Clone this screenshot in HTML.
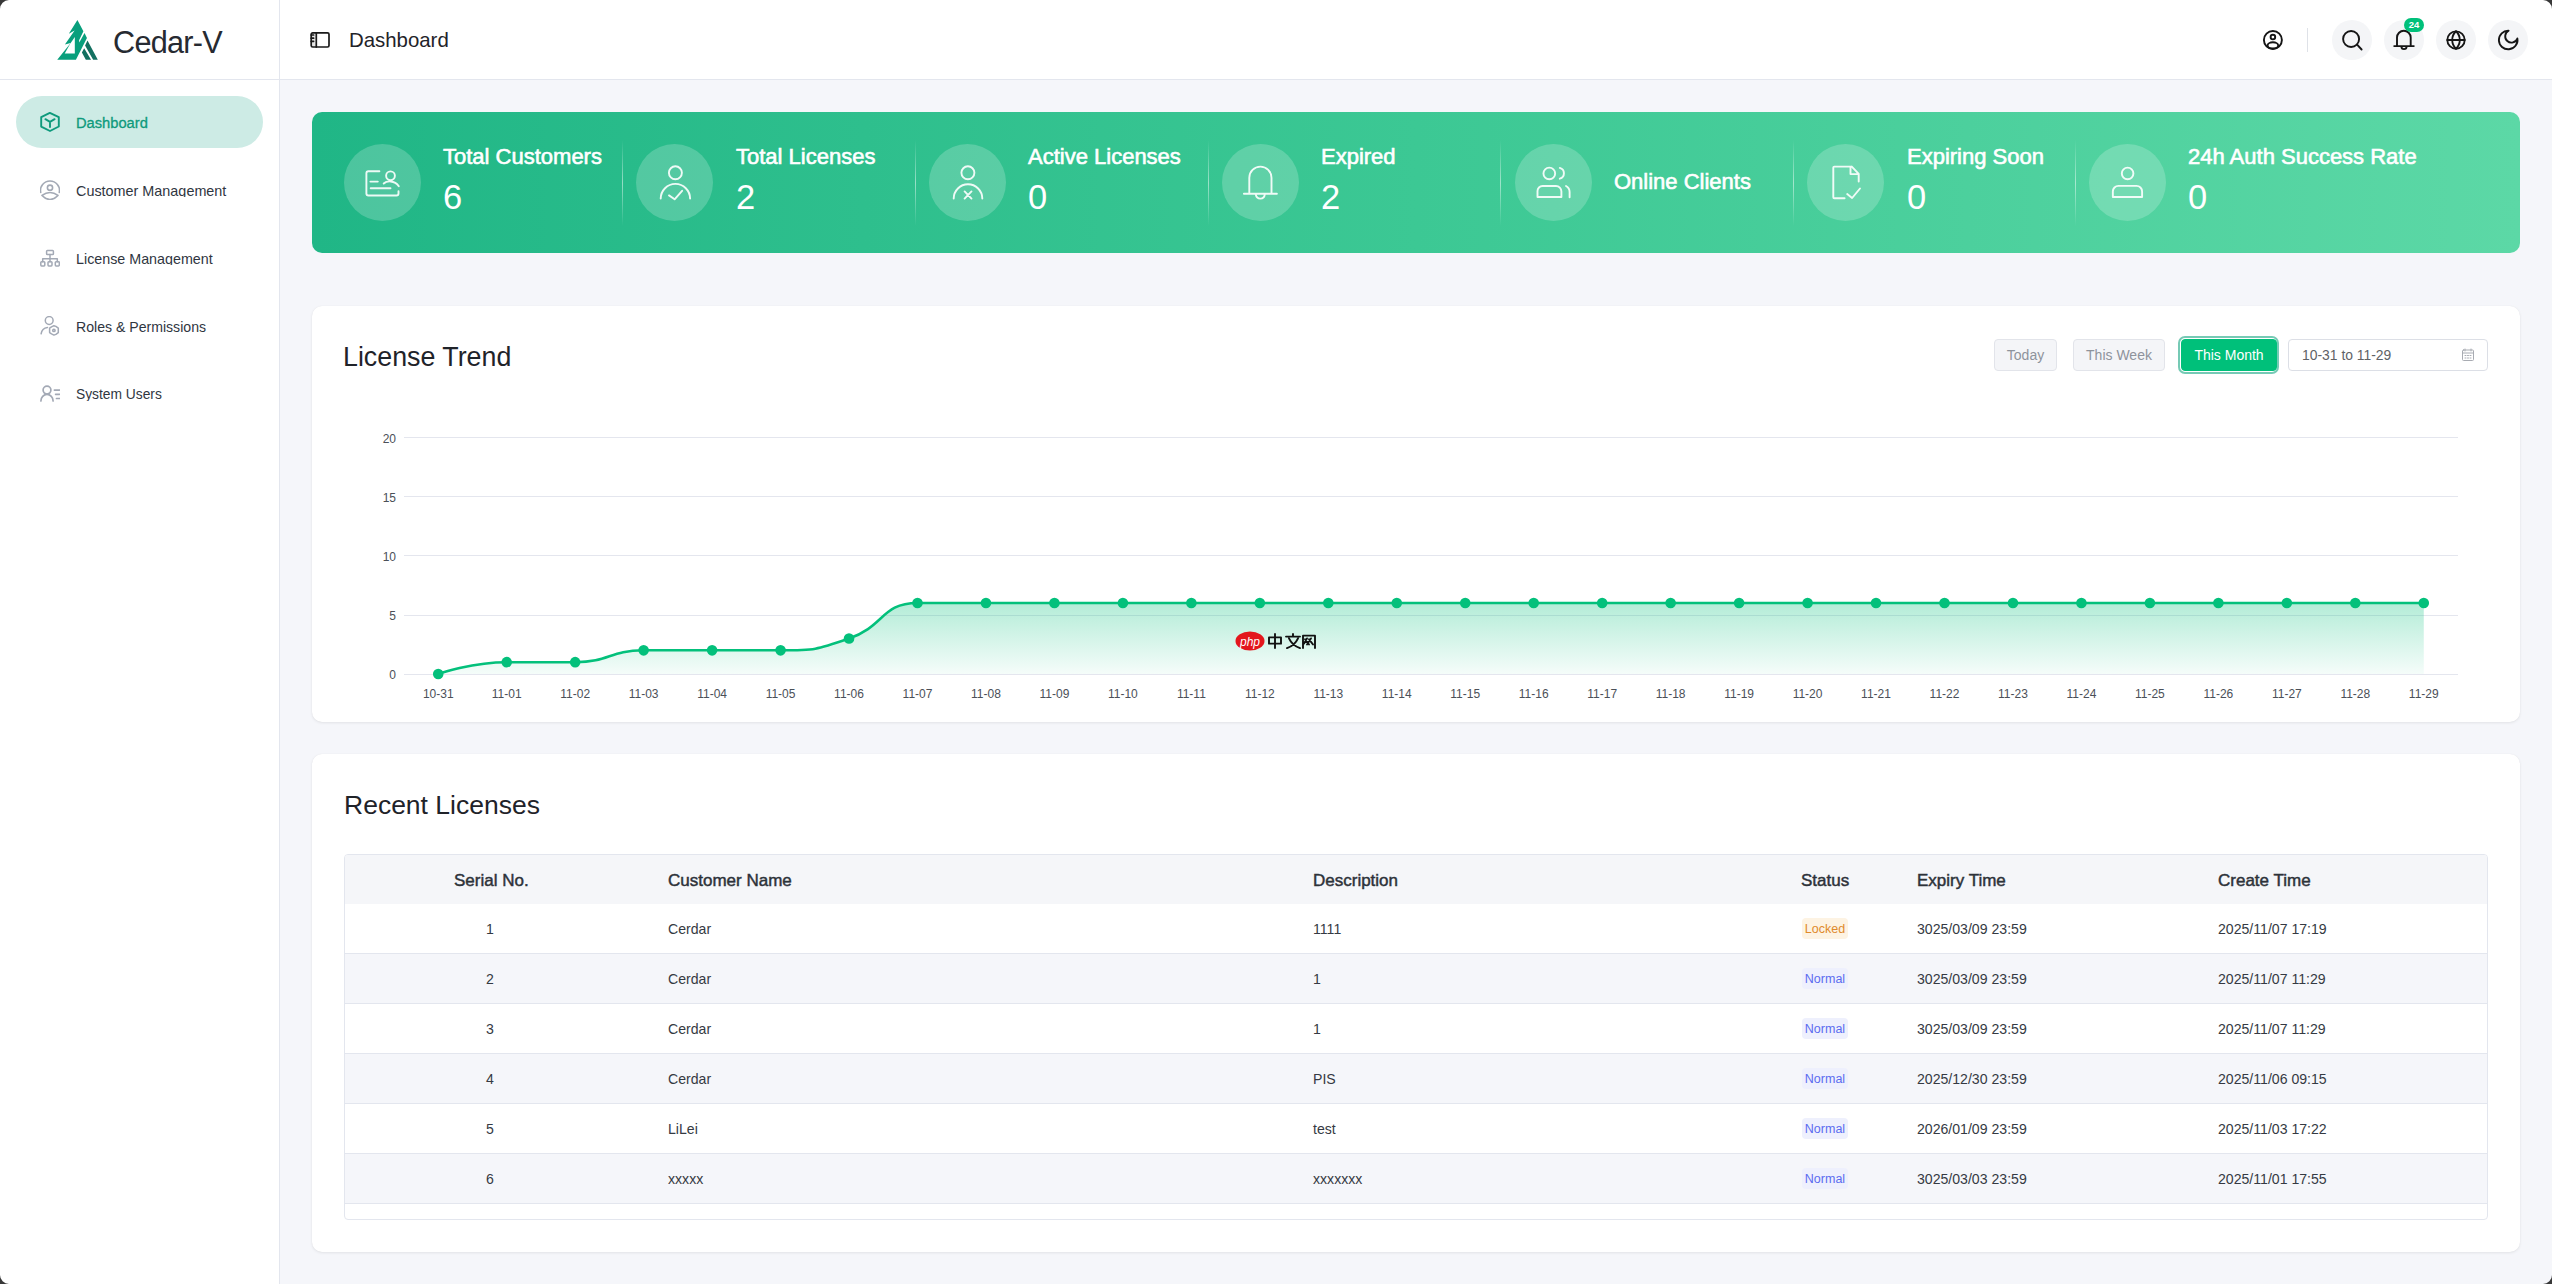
<!DOCTYPE html>
<html><head><meta charset="utf-8">
<style>
*{box-sizing:border-box;margin:0;padding:0}
html,body{width:2552px;height:1284px;overflow:hidden}
body{background:#f5f6fa;font-family:"Liberation Sans",sans-serif;color:#1f2329;position:relative}
.abs{position:absolute}
.side{left:0;top:0;width:280px;height:1284px;background:#fff;border-right:1px solid #e3e6ee}
.logo-bar{left:0;top:0;width:280px;height:80px;border-bottom:1px solid #e3e6ee}
.hdr{left:280px;top:0;width:2272px;height:80px;background:#fff;border-bottom:1px solid #e3e6ee}
.t{position:absolute;white-space:nowrap;line-height:1}
.menu-act{left:16px;top:96px;width:247px;height:52px;border-radius:26px;background:#cdebe5}
.mc{position:absolute;left:70px;width:200px;overflow:hidden}
.mi{position:absolute;left:6px;font-size:14.5px;color:#30363f;white-space:nowrap;line-height:1}
.ico{position:absolute;fill:none;stroke-linecap:round;stroke-linejoin:round}
.banner{left:312px;top:112px;width:2208px;height:141px;border-radius:10px;background:linear-gradient(90deg,#20b686 0%,#3cc894 50%,#5cd8a6 100%)}
.circ{position:absolute;width:77px;height:77px;border-radius:50%;background:rgba(255,255,255,.2)}
.blab{position:absolute;font-weight:normal;-webkit-text-stroke:0.6px #fff;font-size:22px;color:#fff;white-space:nowrap;line-height:1}
.bval{position:absolute;font-size:34.5px;color:#fff;white-space:nowrap;line-height:1}
.bdiv{position:absolute;top:140px;width:1px;height:86px;background:linear-gradient(180deg,rgba(255,255,255,0),rgba(255,255,255,.5) 50%,rgba(255,255,255,0))}
.card{position:absolute;background:#fff;border-radius:10px;box-shadow:0 1px 3px rgba(0,0,0,.08),0 0 1px rgba(0,0,0,.07)}
.btn{position:absolute;top:339px;height:32px;border:1px solid #e2e4ea;background:#f4f5f8;border-radius:4px;font-size:14px;color:#8e939c;line-height:30px;text-align:center}
.hcirc{position:absolute;top:20px;width:40px;height:40px;border-radius:50%;background:#f4f5f7}
table{position:absolute;border-collapse:collapse}
.tbl{position:absolute;left:344px;top:854px;width:2144px;height:366px;border:1px solid #e3e6ee;border-radius:4px;overflow:hidden}
.row{position:absolute;left:0;width:2142px;height:50px;border-bottom:1px solid #e3e6ee}
.th{position:absolute;font-weight:normal;-webkit-text-stroke:0.45px #2d3239;font-size:17px;color:#2d3239;white-space:nowrap;line-height:1;top:17px}
.td{position:absolute;font-size:14.1px;color:#353a43;white-space:nowrap;line-height:1;top:18px}
.tag{position:absolute;top:14px;height:21px;width:46px;border-radius:4px;font-size:12.5px;line-height:23px;text-align:center}
.corner{position:absolute;width:10px;height:10px}
</style></head><body>

<!-- sidebar -->
<div class="abs side"></div>
<div class="abs logo-bar"></div>
<svg class="abs" style="left:52px;top:16px" width="52" height="48" viewBox="0 0 1391 1284">
<path fill="#089f7c" d="M680 105L840 410L725 650L730 710L870 455L935 590L640 1170L140 1170L500 725L345 765L605 385L450 475Z"/>
<path fill="#fff" d="M610 560L610 1000L340 1000L490 735Z"/>
<path fill="#137060" d="M950 655L1225 1170L1100 1170L885 790Z M860 860L1045 1170L905 1170L800 975Z"/>
</svg>
<div class="t" style="left:113px;top:27px;font-size:30.6px;color:#262a31;letter-spacing:-0.7px">Cedar-V</div>

<div class="abs menu-act"></div>
<svg class="ico" style="left:40px;top:112px" width="20" height="20" viewBox="0 0 20 20" stroke="#0e9a7c" stroke-width="1.9">
<path d="M9.85 0.9L18.8 5.2V14.5L10 19L1.2 14.6V5.2Z"/><path d="M5.4 7.2L10 9.8L14.6 7.2M10 9.8V15.1"/></svg>
<div class="mc" style="top:110px;height:19px"><div class="mi" style="top:6px;color:#0e9a7c;font-size:14.7px;-webkit-text-stroke:0.3px #0e9a7c">Dashboard</div></div>

<svg class="ico" style="left:40px;top:180px" width="20" height="20" viewBox="0 0 20 20" stroke="#a3a9b5" stroke-width="1.6">
<path d="M0.7 12.4A9.5 9.5 0 1 1 19.3 12.4"/><circle cx="10" cy="7.7" r="2.6"/><path d="M2 15.4Q10 9.6 18 15.4Q10 23.6 2 15.4Z"/></svg>
<div class="mc" style="top:178px;height:19px"><div class="mi" style="top:6px;font-size:14.4px">Customer Management</div></div>

<svg class="ico" style="left:40px;top:248px" width="20" height="20" viewBox="0 0 20 20" stroke="#a3a9b5" stroke-width="1.5">
<rect x="6.6" y="2.4" width="6.8" height="4.1" rx="0.8"/><path d="M10 6.5V10.8M2.7 13.8V10.8H17.3V13.8M10 10.8V13.8"/><rect x="0.8" y="13.8" width="4" height="4.1" rx="0.8"/><rect x="8" y="13.8" width="4" height="4.1" rx="0.8"/><rect x="15.3" y="13.8" width="4" height="4.1" rx="0.8"/></svg>
<div class="mc" style="top:246px;height:19px"><div class="mi" style="top:6px;font-size:14.3px">License Management</div></div>

<svg class="ico" style="left:40px;top:316px" width="20" height="20" viewBox="0 0 20 20" stroke="#a3a9b5" stroke-width="1.5">
<circle cx="9.2" cy="4.5" r="3.9"/><path d="M1.1 17.8A7.5 7.5 0 0 1 7.5 11.4"/><path d="M13.9 9.7L15.9 10.4L18.3 12.1L18.3 16.7L15.9 18.4L13.9 19.1L11.5 17.9L9.6 16.6V12.2L11.5 10.9Z"/><circle cx="13.9" cy="14.4" r="1.2"/></svg>
<div class="mc" style="top:314px;height:19px"><div class="mi" style="top:6px;font-size:14.1px">Roles &amp; Permissions</div></div>

<svg class="ico" style="left:40px;top:384px" width="20" height="20" viewBox="0 0 20 20" stroke="#a3a9b5" stroke-width="1.7">
<circle cx="7" cy="6.1" r="3.9"/><path d="M0.9 17A6.1 6.6 0 0 1 13.1 17"/><path d="M14.4 6.1H19.5M15.6 10.3H19.5M16.5 14.5H19.5"/></svg>
<div class="mc" style="top:382px;height:19px"><div class="mi" style="top:6px;font-size:13.8px">System Users</div></div>

<!-- header -->
<div class="abs hdr"></div>
<svg class="ico" style="left:309px;top:30px" width="22" height="20" viewBox="0 0 22 20" stroke="#1a1a1a" stroke-width="1.7">
<rect x="2.2" y="2.8" width="5.1" height="14.2" fill="#e6e6e6" stroke="none"/><rect x="2.2" y="2.8" width="17.8" height="14.2" rx="1.5"/><path d="M7.3 2.8V17M2.2 5H4.6M2.2 8.2H4.6M2.2 11.3H4.6"/></svg>
<div class="t" style="left:349px;top:30px;font-size:20.4px;color:#1f2329">Dashboard</div>

<svg class="ico" style="left:2260px;top:27px" width="26" height="26" viewBox="0 0 26 26" stroke="#151515" stroke-width="1.9">
<circle cx="12.9" cy="13" r="9"/><circle cx="12.9" cy="10.04" r="2.3"/><ellipse cx="12.9" cy="18.4" rx="5.3" ry="3.1"/></svg>
<div class="abs" style="left:2307px;top:28px;width:1px;height:24px;background:#dfe2e8"></div>
<div class="hcirc" style="left:2332px"></div>
<div class="hcirc" style="left:2384px"></div>
<div class="hcirc" style="left:2436px"></div>
<div class="hcirc" style="left:2488px"></div>
<svg class="ico" style="left:2338px;top:26px" width="26" height="26" viewBox="0 0 26 26" stroke="#151515" stroke-width="1.9">
<circle cx="13.1" cy="13" r="8"/><path d="M19.1 18.6L23.6 23.5"/></svg>
<svg class="ico" style="left:2390px;top:26px" width="28" height="28" viewBox="0 0 28 28" stroke="#151515" stroke-width="1.9">
<path d="M7 20.1V11.55A6.85 6.85 0 0 1 20.7 11.55V20.1M4.2 20.1H23.8M11.4 20.5A2.6 2.6 0 0 0 16.6 20.5"/></svg>
<div class="abs" style="left:2404px;top:18px;width:20px;height:14px;border-radius:7px;background:#00c07a;color:#fff;font-size:9.5px;font-weight:bold;line-height:14px;text-align:center">24</div>
<svg class="ico" style="left:2445px;top:29px" width="22" height="22" viewBox="0 0 24 24" stroke="#151515" stroke-width="2">
<circle cx="12" cy="12" r="9.5"/><path d="M12 2.5a13 13 0 0 0 0 19 13 13 0 0 0 0-19"/><path d="M2.5 12h19"/></svg>
<svg class="ico" style="left:2496px;top:28px" width="26" height="26" viewBox="0 0 26 26" stroke="#151515" stroke-width="1.9">
<path d="M12.6 2.71A9.3 9.3 0 1 0 21.38 10.55A6.3 6.3 0 1 1 12.6 2.71Z"/></svg>

<!-- banner -->
<div class="abs banner"></div>
<div class="circ" style="left:344px;top:144px"></div>
<div class="circ" style="left:636px;top:144px"></div>
<div class="circ" style="left:929px;top:144px"></div>
<div class="circ" style="left:1222px;top:144px"></div>
<div class="circ" style="left:1515px;top:144px"></div>
<div class="circ" style="left:1807px;top:144px"></div>
<div class="circ" style="left:2089px;top:144px"></div>
<div class="bdiv" style="left:622px"></div>
<div class="bdiv" style="left:915px"></div>
<div class="bdiv" style="left:1208px"></div>
<div class="bdiv" style="left:1500px"></div>
<div class="bdiv" style="left:1793px"></div>
<div class="bdiv" style="left:2075px"></div>

<!-- banner icons -->
<svg class="ico" style="left:360px;top:164px" width="46" height="42" viewBox="0 0 46 42" stroke="rgba(255,255,255,.9)" stroke-width="1.9">
<path d="M19.4 7.25H8.4a2 2 0 0 0-2 2V29.5a2 2 0 0 0 2 2H36.5a2 2 0 0 0 2-2V27.2"/><path d="M10.4 17.6H17.8M10.7 24.3H30.5"/><circle cx="30.5" cy="11.8" r="4.4"/><path d="M23.7 19.5C26.5 16.8 34.5 15.8 38.8 22.2"/></svg>
<svg class="ico" style="left:652px;top:162px" width="46" height="42" viewBox="0 0 46 42" stroke="rgba(255,255,255,.9)" stroke-width="1.9">
<circle cx="23.4" cy="10.8" r="6.5"/><path d="M8.7 36.6A14.7 14.7 0 0 1 38.1 36.6"/><path d="M17 33.4L22.6 37.3L30.1 28.8"/></svg>
<svg class="ico" style="left:945px;top:162px" width="46" height="42" viewBox="0 0 46 42" stroke="rgba(255,255,255,.9)" stroke-width="1.9">
<circle cx="22.9" cy="10.8" r="6.5"/><path d="M8.7 36.6A14.3 14.3 0 0 1 37.3 36.6"/><path d="M19.6 29.4L26.5 36.6M26.5 29.4L19.6 36.6"/></svg>
<svg class="ico" style="left:1238px;top:162px" width="46" height="42" viewBox="0 0 46 42" stroke="rgba(255,255,255,.9)" stroke-width="1.9">
<path d="M11.3 31.7V15.7A11.1 11.1 0 0 1 33.5 15.7V31.7M5.9 31.7H38.9M17.7 32.4Q18.5 36.6 22.4 36.6Q26.3 36.6 26.8 32.4"/></svg>
<svg class="ico" style="left:1531px;top:162px" width="46" height="42" viewBox="0 0 46 42" stroke="rgba(255,255,255,.9)" stroke-width="1.9">
<circle cx="18.3" cy="11.45" r="5.85"/><path d="M6.5 35V29A5 5 0 0 1 11.5 24H25A5.4 5.4 0 0 1 30.4 29.4V35Z"/><path d="M28.8 5.9A5.6 5.6 0 0 1 28.8 16.7M35 24Q38.6 26 38.6 30V35.3"/></svg>
<svg class="ico" style="left:1823px;top:162px" width="46" height="42" viewBox="0 0 46 42" stroke="rgba(255,255,255,.9)" stroke-width="1.9">
<path d="M28.8 4.6H11.3a1 1 0 0 0-1 1V35.3a1 1 0 0 0 1 1H21.6M28.8 4.6L35.7 11.8V19.6M27.5 5.2V12.1H35"/><path d="M24.2 32.1L29.1 36L37 26.5"/></svg>
<svg class="ico" style="left:2105px;top:162px" width="46" height="42" viewBox="0 0 46 42" stroke="rgba(255,255,255,.9)" stroke-width="1.9">
<circle cx="22.6" cy="11.45" r="5.8"/><path d="M7.85 35V29.5A5.6 5.6 0 0 1 13.45 23.9H31.5A5.6 5.6 0 0 1 37.1 29.5V35Z"/></svg>

<div class="blab" style="left:443px;top:146px">Total Customers</div>
<div class="bval" style="left:443px;top:180px">6</div>
<div class="blab" style="left:736px;top:146px">Total Licenses</div>
<div class="bval" style="left:736px;top:180px">2</div>
<div class="blab" style="left:1028px;top:146px">Active Licenses</div>
<div class="bval" style="left:1028px;top:180px">0</div>
<div class="blab" style="left:1321px;top:146px">Expired</div>
<div class="bval" style="left:1321px;top:180px">2</div>
<div class="blab" style="left:1614px;top:171px">Online Clients</div>
<div class="blab" style="left:1907px;top:146px">Expiring Soon</div>
<div class="bval" style="left:1907px;top:180px">0</div>
<div class="blab" style="left:2188px;top:146px">24h Auth Success Rate</div>
<div class="bval" style="left:2188px;top:180px">0</div>

<!-- chart card -->
<div class="card" style="left:312px;top:306px;width:2208px;height:416px"></div>
<div class="t" style="left:343px;top:344px;font-size:26.8px;color:#1f2329">License Trend</div>
<div class="btn" style="left:1994px;width:63px">Today</div>
<div class="btn" style="left:2073px;width:92px">This Week</div>
<div class="abs" style="left:2178px;top:336px;width:101px;height:38px;border:2px solid #76cab5;border-radius:7px"></div>
<div class="btn" style="left:2181px;width:96px;background:#00c07a;border-color:#00c07a;color:#fff">This Month</div>
<div class="abs" style="left:2288px;top:339px;width:200px;height:32px;border:1px solid #dcdfe6;border-radius:4px;background:#fff"></div>
<div class="t" style="left:2302px;top:349px;font-size:13.9px;color:#606266">10-31 to 11-29</div>
<svg class="ico" style="left:2461px;top:348px" width="14" height="14" viewBox="0 0 14 14" stroke="#a8abb2" stroke-width="1">
<rect x="1.5" y="2" width="11" height="10.5" rx="1"/><path d="M1.5 5h11M4 1v2M10 1v2"/><path d="M4 7.5h1M6.5 7.5h1M9 7.5h1M4 10h1M6.5 10h1M9 10h1"/></svg>

<svg class="abs" style="left:0;top:0" width="2552" height="1284">
<defs><linearGradient id="ag" x1="0" y1="0" x2="0" y2="1"><stop offset="0" stop-color="#03c07b" stop-opacity=".3"/><stop offset="1" stop-color="#03c07b" stop-opacity=".04"/></linearGradient></defs>
<g stroke="#e4e6ee" stroke-width="1">
<path d="M404 437.5H2458M404 496.5H2458M404 555.5H2458M404 615.5H2458M404 674.5H2458"/>
</g>
<g font-family="Liberation Sans" font-size="12" fill="#4b5058" text-anchor="end">
<text x="396" y="442.5">20</text><text x="396" y="501.5">15</text><text x="396" y="560.5">10</text><text x="396" y="619.5">5</text><text x="396" y="679">0</text>
</g>
<path d="M438.23 674.00C438.23 674.00 472.22 662.17 506.70 662.17C540.68 662.17 541.18 662.17 575.17 662.17C609.65 662.17 609.15 650.35 643.63 650.35C677.62 650.35 677.87 650.35 712.10 650.35C746.33 650.35 746.58 650.35 780.57 650.35C815.05 650.35 816.58 649.73 849.03 638.52C885.05 626.08 881.23 603.05 917.50 603.05C949.70 603.05 951.73 603.05 985.97 603.05C1020.20 603.05 1020.20 603.05 1054.43 603.05C1088.67 603.05 1088.67 603.05 1122.90 603.05C1157.13 603.05 1157.13 603.05 1191.37 603.05C1225.60 603.05 1225.60 603.05 1259.83 603.05C1294.07 603.05 1294.07 603.05 1328.30 603.05C1362.53 603.05 1362.53 603.05 1396.77 603.05C1431.00 603.05 1431.00 603.05 1465.23 603.05C1499.47 603.05 1499.47 603.05 1533.70 603.05C1567.93 603.05 1567.93 603.05 1602.17 603.05C1636.40 603.05 1636.40 603.05 1670.63 603.05C1704.87 603.05 1704.87 603.05 1739.10 603.05C1773.33 603.05 1773.33 603.05 1807.57 603.05C1841.80 603.05 1841.80 603.05 1876.03 603.05C1910.27 603.05 1910.27 603.05 1944.50 603.05C1978.73 603.05 1978.73 603.05 2012.97 603.05C2047.20 603.05 2047.20 603.05 2081.43 603.05C2115.67 603.05 2115.67 603.05 2149.90 603.05C2184.13 603.05 2184.13 603.05 2218.37 603.05C2252.60 603.05 2252.60 603.05 2286.83 603.05C2321.07 603.05 2321.07 603.05 2355.30 603.05C2389.53 603.05 2423.77 603.05 2423.77 603.05L2423.77 674.00 L438.23 674.00 Z" fill="url(#ag)"/>
<path d="M438.23 674.00C438.23 674.00 472.22 662.17 506.70 662.17C540.68 662.17 541.18 662.17 575.17 662.17C609.65 662.17 609.15 650.35 643.63 650.35C677.62 650.35 677.87 650.35 712.10 650.35C746.33 650.35 746.58 650.35 780.57 650.35C815.05 650.35 816.58 649.73 849.03 638.52C885.05 626.08 881.23 603.05 917.50 603.05C949.70 603.05 951.73 603.05 985.97 603.05C1020.20 603.05 1020.20 603.05 1054.43 603.05C1088.67 603.05 1088.67 603.05 1122.90 603.05C1157.13 603.05 1157.13 603.05 1191.37 603.05C1225.60 603.05 1225.60 603.05 1259.83 603.05C1294.07 603.05 1294.07 603.05 1328.30 603.05C1362.53 603.05 1362.53 603.05 1396.77 603.05C1431.00 603.05 1431.00 603.05 1465.23 603.05C1499.47 603.05 1499.47 603.05 1533.70 603.05C1567.93 603.05 1567.93 603.05 1602.17 603.05C1636.40 603.05 1636.40 603.05 1670.63 603.05C1704.87 603.05 1704.87 603.05 1739.10 603.05C1773.33 603.05 1773.33 603.05 1807.57 603.05C1841.80 603.05 1841.80 603.05 1876.03 603.05C1910.27 603.05 1910.27 603.05 1944.50 603.05C1978.73 603.05 1978.73 603.05 2012.97 603.05C2047.20 603.05 2047.20 603.05 2081.43 603.05C2115.67 603.05 2115.67 603.05 2149.90 603.05C2184.13 603.05 2184.13 603.05 2218.37 603.05C2252.60 603.05 2252.60 603.05 2286.83 603.05C2321.07 603.05 2321.07 603.05 2355.30 603.05C2389.53 603.05 2423.77 603.05 2423.77 603.05" fill="none" stroke="#03c07b" stroke-width="2.5"/>
<g fill="#03c07b"><circle cx="438.23" cy="674.00" r="5.3"/><circle cx="506.70" cy="662.17" r="5.3"/><circle cx="575.17" cy="662.17" r="5.3"/><circle cx="643.63" cy="650.35" r="5.3"/><circle cx="712.10" cy="650.35" r="5.3"/><circle cx="780.57" cy="650.35" r="5.3"/><circle cx="849.03" cy="638.52" r="5.3"/><circle cx="917.50" cy="603.05" r="5.3"/><circle cx="985.97" cy="603.05" r="5.3"/><circle cx="1054.43" cy="603.05" r="5.3"/><circle cx="1122.90" cy="603.05" r="5.3"/><circle cx="1191.37" cy="603.05" r="5.3"/><circle cx="1259.83" cy="603.05" r="5.3"/><circle cx="1328.30" cy="603.05" r="5.3"/><circle cx="1396.77" cy="603.05" r="5.3"/><circle cx="1465.23" cy="603.05" r="5.3"/><circle cx="1533.70" cy="603.05" r="5.3"/><circle cx="1602.17" cy="603.05" r="5.3"/><circle cx="1670.63" cy="603.05" r="5.3"/><circle cx="1739.10" cy="603.05" r="5.3"/><circle cx="1807.57" cy="603.05" r="5.3"/><circle cx="1876.03" cy="603.05" r="5.3"/><circle cx="1944.50" cy="603.05" r="5.3"/><circle cx="2012.97" cy="603.05" r="5.3"/><circle cx="2081.43" cy="603.05" r="5.3"/><circle cx="2149.90" cy="603.05" r="5.3"/><circle cx="2218.37" cy="603.05" r="5.3"/><circle cx="2286.83" cy="603.05" r="5.3"/><circle cx="2355.30" cy="603.05" r="5.3"/><circle cx="2423.77" cy="603.05" r="5.3"/></g>
<g font-family="Liberation Sans" font-size="12" fill="#4b5058" text-anchor="middle"><text x="438.23" y="697.5">10-31</text><text x="506.70" y="697.5">11-01</text><text x="575.17" y="697.5">11-02</text><text x="643.63" y="697.5">11-03</text><text x="712.10" y="697.5">11-04</text><text x="780.57" y="697.5">11-05</text><text x="849.03" y="697.5">11-06</text><text x="917.50" y="697.5">11-07</text><text x="985.97" y="697.5">11-08</text><text x="1054.43" y="697.5">11-09</text><text x="1122.90" y="697.5">11-10</text><text x="1191.37" y="697.5">11-11</text><text x="1259.83" y="697.5">11-12</text><text x="1328.30" y="697.5">11-13</text><text x="1396.77" y="697.5">11-14</text><text x="1465.23" y="697.5">11-15</text><text x="1533.70" y="697.5">11-16</text><text x="1602.17" y="697.5">11-17</text><text x="1670.63" y="697.5">11-18</text><text x="1739.10" y="697.5">11-19</text><text x="1807.57" y="697.5">11-20</text><text x="1876.03" y="697.5">11-21</text><text x="1944.50" y="697.5">11-22</text><text x="2012.97" y="697.5">11-23</text><text x="2081.43" y="697.5">11-24</text><text x="2149.90" y="697.5">11-25</text><text x="2218.37" y="697.5">11-26</text><text x="2286.83" y="697.5">11-27</text><text x="2355.30" y="697.5">11-28</text><text x="2423.77" y="697.5">11-29</text></g>
<!-- watermark -->
<ellipse cx="1250" cy="641" rx="14.5" ry="9.5" fill="#e3161c"/>
<text x="1250" y="645.5" font-family="Liberation Sans" font-style="italic" font-size="12" fill="#fff" text-anchor="middle">php</text>
</svg>
<svg class="ico" style="left:1267px;top:633px" width="50" height="16" viewBox="0 0 50 18" preserveAspectRatio="none" stroke="#111" stroke-width="1.9">
<path d="M2 5h12v7H2z M8 1v16"/><path d="M19 4h14M22 6c2 5 6 9 11 11M31 6c-2 5-6 9-11 11M26 1v3"/><path d="M36 3h12v14M36 3v14M38 7l4 6M42 7l4 6M44 6l-4 7M40 6l-3 6"/></svg>

<!-- table card -->
<div class="card" style="left:312px;top:754px;width:2208px;height:498px"></div>
<div class="t" style="left:344px;top:792px;font-size:26.5px;color:#1f2329">Recent Licenses</div>
<div class="tbl">
<div class="row" style="top:0;background:#f5f6f9;border-bottom:none;height:49px">
<div class="th" style="left:109px">Serial No.</div>
<div class="th" style="left:323px">Customer Name</div>
<div class="th" style="left:968px">Description</div>
<div class="th" style="left:1456px">Status</div>
<div class="th" style="left:1572px">Expiry Time</div>
<div class="th" style="left:1873px">Create Time</div>
</div>
<div class="row" style="top:49px;background:#fff"><div class="td" style="left:95px;width:100px;text-align:center">1</div><div class="td" style="left:323px">Cerdar</div><div class="td" style="left:968px">1111</div><div class="tag" style="left:1457px;background:#fdf3e3;color:#e08a2c">Locked</div><div class="td" style="left:1572px">3025/03/09 23:59</div><div class="td" style="left:1873px">2025/11/07 17:19</div></div>
<div class="row" style="top:99px;background:#f5f6fa"><div class="td" style="left:95px;width:100px;text-align:center">2</div><div class="td" style="left:323px">Cerdar</div><div class="td" style="left:968px">1</div><div class="tag" style="left:1457px;background:#eef0fd;color:#5b6cf0">Normal</div><div class="td" style="left:1572px">3025/03/09 23:59</div><div class="td" style="left:1873px">2025/11/07 11:29</div></div>
<div class="row" style="top:149px;background:#fff"><div class="td" style="left:95px;width:100px;text-align:center">3</div><div class="td" style="left:323px">Cerdar</div><div class="td" style="left:968px">1</div><div class="tag" style="left:1457px;background:#eef0fd;color:#5b6cf0">Normal</div><div class="td" style="left:1572px">3025/03/09 23:59</div><div class="td" style="left:1873px">2025/11/07 11:29</div></div>
<div class="row" style="top:199px;background:#f5f6fa"><div class="td" style="left:95px;width:100px;text-align:center">4</div><div class="td" style="left:323px">Cerdar</div><div class="td" style="left:968px">PIS</div><div class="tag" style="left:1457px;background:#eef0fd;color:#5b6cf0">Normal</div><div class="td" style="left:1572px">2025/12/30 23:59</div><div class="td" style="left:1873px">2025/11/06 09:15</div></div>
<div class="row" style="top:249px;background:#fff"><div class="td" style="left:95px;width:100px;text-align:center">5</div><div class="td" style="left:323px">LiLei</div><div class="td" style="left:968px">test</div><div class="tag" style="left:1457px;background:#eef0fd;color:#5b6cf0">Normal</div><div class="td" style="left:1572px">2026/01/09 23:59</div><div class="td" style="left:1873px">2025/11/03 17:22</div></div>
<div class="row" style="top:299px;background:#f5f6fa"><div class="td" style="left:95px;width:100px;text-align:center">6</div><div class="td" style="left:323px">xxxxx</div><div class="td" style="left:968px">xxxxxxx</div><div class="tag" style="left:1457px;background:#eef0fd;color:#5b6cf0">Normal</div><div class="td" style="left:1572px">3025/03/03 23:59</div><div class="td" style="left:1873px">2025/11/01 17:55</div></div>
</div>

<!-- window corners -->
<svg class="abs" style="left:0;top:0" width="2552" height="1284" pointer-events="none">
<path fill="#383838" d="M0 0H9A9 9 0 0 0 0 9Z M2552 0V9A9 9 0 0 0 2543 0Z M2552 1284H2543A9 9 0 0 0 2552 1275Z M0 1284V1275A9 9 0 0 0 9 1284Z"/>
</svg>
</body></html>
